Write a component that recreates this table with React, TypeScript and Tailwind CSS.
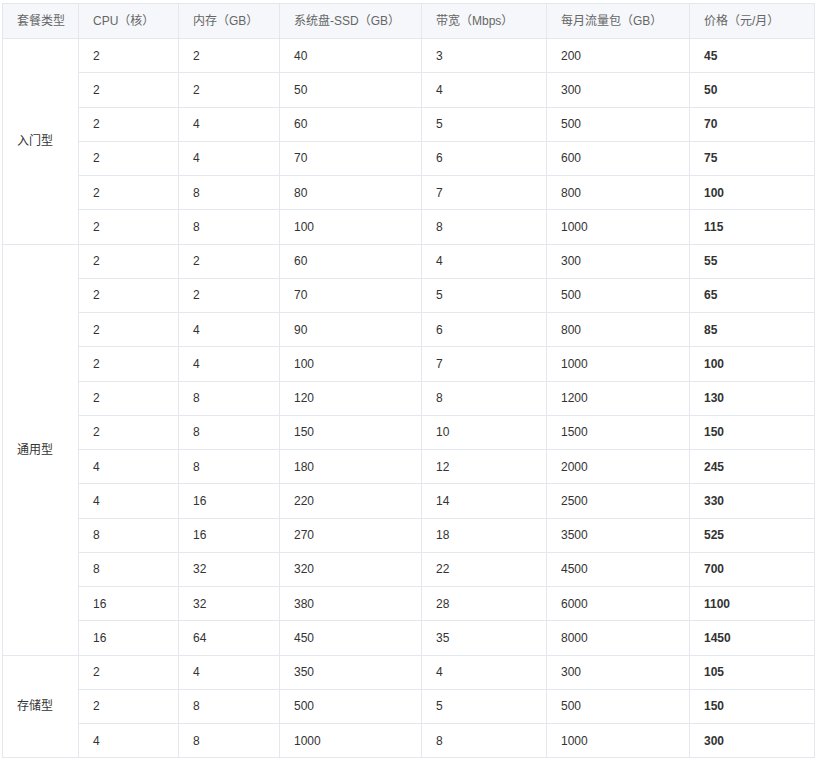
const groups = [
  {
    name: '入门型',
    rows: [
      [2, 2, 40, 3, 200, 45],
      [2, 2, 50, 4, 300, 50],
      [2, 4, 60, 5, 500, 70],
      [2, 4, 70, 6, 600, 75],
      [2, 8, 80, 7, 800, 100],
      [2, 8, 100, 8, 1000, 115],
    ],
  },
  {
    name: '通用型',
    rows: [
      [2, 2, 60, 4, 300, 55],
      [2, 2, 70, 5, 500, 65],
      [2, 4, 90, 6, 800, 85],
      [2, 4, 100, 7, 1000, 100],
      [2, 8, 120, 8, 1200, 130],
      [2, 8, 150, 10, 1500, 150],
      [4, 8, 180, 12, 2000, 245],
      [4, 16, 220, 14, 2500, 330],
      [8, 16, 270, 18, 3500, 525],
      [8, 32, 320, 22, 4500, 700],
      [16, 32, 380, 28, 6000, 1100],
      [16, 64, 450, 35, 8000, 1450],
    ],
  },
  {
    name: '存储型',
    rows: [
      [2, 4, 350, 4, 300, 105],
      [2, 8, 500, 5, 500, 150],
      [4, 8, 1000, 8, 1000, 300],
    ],
  },
];

const headers = ['套餐类型', 'CPU（核）', '内存（GB）', '系统盘-SSD（GB）', '带宽（Mbps）', '每月流量包（GB）', '价格（元/月）'];
const widths = ['w-[76px]', 'w-[100px]', 'w-[101px]', 'w-[142px]', 'w-[125px]', 'w-[143px]', 'w-[125px]'];

const App = () => {
  return (
    <div className="min-h-screen bg-white pt-[3px] pl-[2px]">
      <table
        className="w-[812px] table-fixed border-collapse text-[12px] text-[#333]"
        style={{ fontFamily: '"Liberation Sans", Arial, "Noto Sans CJK SC", sans-serif' }}
      >
        <thead>
          <tr className="h-[35px] bg-[#f5f7fa]">
            {headers.map((h, i) => (
              <th
                key={h}
                className={`${widths[i]} border border-[#e4e7ed] pl-[14px] text-left font-normal text-[#666]`}
              >
                {h}
              </th>
            ))}
          </tr>
        </thead>
        <tbody>
          {groups.map((g) =>
            g.rows.map((r, ri) => (
              <tr key={g.name + ri} className="h-[34.25px]">
                {ri === 0 && (
                  <td rowSpan={g.rows.length} className="border border-[#e4e7ed] pl-[14px] text-[#333]">
                    {g.name}
                  </td>
                )}
                {r.map((v, ci) => (
                  <td
                    key={ci}
                    className={`border border-[#e4e7ed] pl-[14px] ${ci === 5 ? 'font-bold' : ''}`}
                  >
                    {v}
                  </td>
                ))}
              </tr>
            ))
          )}
        </tbody>
      </table>
    </div>
  );
};

export default App;
